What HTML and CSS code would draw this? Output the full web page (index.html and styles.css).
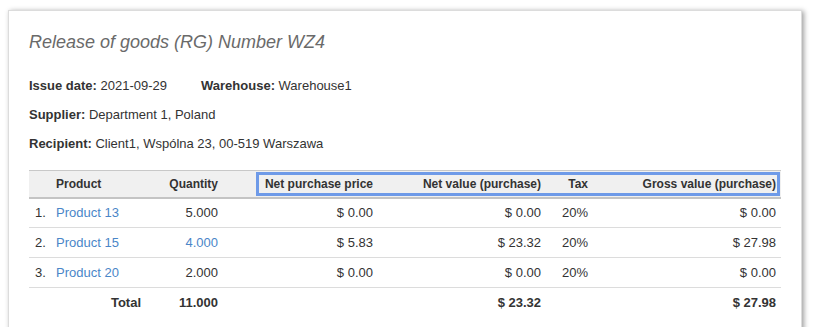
FILE: index.html
```html
<!DOCTYPE html>
<html>
<head>
<meta charset="utf-8">
<link rel="stylesheet" href="styles.css">
</head>
<body>
<div class="card">
  <h1 class="title">Release of goods (RG) Number WZ4</h1>
  <div class="info">
    <div class="info-row">
      <span><b>Issue date:</b> 2021-09-29</span>
      <span><b>Warehouse:</b> Warehouse1</span>
    </div>
    <div class="info-row"><span><b>Supplier:</b> Department 1, Poland</span></div>
    <div class="info-row"><span><b>Recipient:</b> Client1, Wspólna 23, 00-519 Warszawa</span></div>
  </div>
  <div class="table-wrap">
    <table class="items">
      <colgroup>
        <col class="c-num"><col class="c-prod"><col class="c-qty"><col class="c-price"><col class="c-net"><col class="c-tax"><col class="c-gross">
      </colgroup>
      <thead>
        <tr>
          <th class="num"></th>
          <th class="left">Product</th>
          <th>Quantity</th>
          <th>Net purchase price</th>
          <th>Net value (purchase)</th>
          <th>Tax</th>
          <th>Gross value (purchase)</th>
        </tr>
      </thead>
      <tbody>
        <tr>
          <td class="num">1.</td>
          <td class="left"><a href="#">Product 13</a></td>
          <td>5.000</td>
          <td>$ 0.00</td>
          <td>$ 0.00</td>
          <td>20%</td>
          <td>$ 0.00</td>
        </tr>
        <tr>
          <td class="num">2.</td>
          <td class="left"><a href="#">Product 15</a></td>
          <td><a href="#">4.000</a></td>
          <td>$ 5.83</td>
          <td>$ 23.32</td>
          <td>20%</td>
          <td>$ 27.98</td>
        </tr>
        <tr>
          <td class="num">3.</td>
          <td class="left"><a href="#">Product 20</a></td>
          <td>2.000</td>
          <td>$ 0.00</td>
          <td>$ 0.00</td>
          <td>20%</td>
          <td>$ 0.00</td>
        </tr>
      </tbody>
      <tfoot>
        <tr>
          <td colspan="2">Total</td>
          <td>11.000</td>
          <td></td>
          <td>$ 23.32</td>
          <td></td>
          <td>$ 27.98</td>
        </tr>
      </tfoot>
    </table>
    <div class="focus-box"></div>
  </div>
</div>
</body>
</html>
```

FILE: styles.css
```css
* { box-sizing: border-box; }
html, body { margin: 0; padding: 0; background: #fff; }
body {
  font-family: "Liberation Sans", Arial, sans-serif;
  font-size: 13px;
  color: #333;
}
.card {
  width: 794px;
  margin: 10px 0 0 8px;
  padding: 20px 20px 20px 20px;
  border: 1px solid #dcdcdc;
  background: #fff;
  box-shadow: 2px 1px 5px rgba(0, 0, 0, 0.38);
}
.title {
  margin: 0;
  font-size: 18px;
  line-height: 22px;
  font-weight: normal;
  font-style: italic;
  color: #6a6a6a;
}
.info {
  margin-top: 18px;
}
.info-row {
  display: flex;
  gap: 34px;
  height: 29px;
  line-height: 29px;
}
.info-row b { font-weight: bold; }
.table-wrap {
  position: relative;
  margin-top: 12px;
}
.items {
  width: 752px;
  table-layout: fixed;
  border-collapse: collapse;
}
.c-num { width: 21px; }
.c-prod { width: 96px; }
.c-qty { width: 77px; }
.c-price { width: 155px; }
.c-net { width: 168px; }
.c-tax { width: 47px; }
.c-gross { width: 188px; }
.items th {
  background: #f0f0f0;
  font-size: 12px;
  font-weight: bold;
  color: #333;
  text-align: right;
  height: 27px;
  padding: 0 5px;
  border-top: 1px solid #c8c8c8;
  border-bottom: 2px solid #c4c4c4;
  white-space: nowrap;
}
.items td {
  text-align: right;
  height: 30px;
  padding: 0 5px;
  border-bottom: 1px solid #dcdcdc;
  white-space: nowrap;
}
.items .left { text-align: left; padding-left: 6px; }
.items .num { text-align: left; padding: 0 0 0 6px; }
.items a { color: #4a86c8; text-decoration: none; }
.items tfoot td {
  border-bottom: none;
  font-weight: bold;
  height: 29px;
}
.focus-box {
  position: absolute;
  left: 227px;
  top: 2px;
  width: 524px;
  height: 24px;
  border: 3px solid #6e9ae8;
  pointer-events: none;
}
```
